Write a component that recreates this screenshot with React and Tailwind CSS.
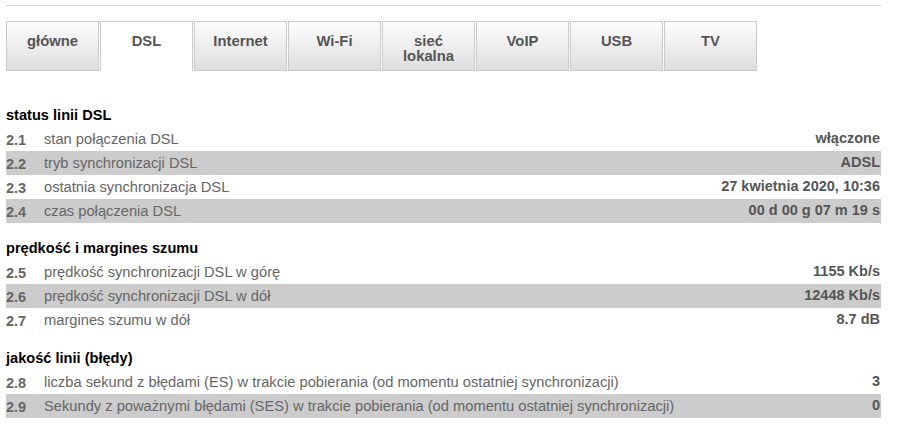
import React from 'react';

const tabs = [
  { id: 'glowne', label: 'główne' },
  { id: 'dsl', label: 'DSL' },
  { id: 'internet', label: 'Internet' },
  { id: 'wifi', label: 'Wi-Fi' },
  { id: 'lan', label: ['sieć', 'lokalna'] },
  { id: 'voip', label: 'VoIP' },
  { id: 'usb', label: 'USB' },
  { id: 'tv', label: 'TV' },
];

const sections = [
  {
    title: 'status linii DSL',
    spacing: 'mt-[32px]',
    rows: [
      ['2.1', 'stan połączenia DSL', 'włączone'],
      ['2.2', 'tryb synchronizacji DSL', 'ADSL'],
      ['2.3', 'ostatnia synchronizacja DSL', '27 kwietnia 2020, 10:36'],
      ['2.4', 'czas połączenia DSL', '00 d 00 g 07 m 19 s'],
    ],
  },
  {
    title: 'prędkość i margines szumu',
    spacing: 'mt-[13px]',
    rows: [
      ['2.5', 'prędkość synchronizacji DSL w górę', '1155 Kb/s'],
      ['2.6', 'prędkość synchronizacji DSL w dół', '12448 Kb/s'],
      ['2.7', 'margines szumu w dół', '8.7 dB'],
    ],
  },
  {
    title: 'jakość linii (błędy)',
    spacing: 'mt-[14px]',
    rows: [
      ['2.8', 'liczba sekund z błędami (ES) w trakcie pobierania (od momentu ostatniej synchronizacji)', '3'],
      ['2.9', 'Sekundy z poważnymi błędami (SES) w trakcie pobierania (od momentu ostatniej synchronizacji)', '0'],
    ],
  },
];

const Tab = ({ label, active }) => (
  <div
    className={`w-[93px] h-[50px] shrink-0 border border-[#cacaca] text-center text-[14.8px] leading-[15px] font-bold text-[#555] pt-[12px] ${
      active ? 'bg-white border-b-0' : 'bg-gradient-to-b from-[#fdfdfd] to-[#dedede]'
    }`}
  >
    {Array.isArray(label) ? (
      <>
        {label[0]}
        <br />
        {label[1]}
      </>
    ) : (
      label
    )}
  </div>
);

const App = () => {
  return (
    <div className="w-[898px] h-[438px] bg-white overflow-hidden font-['Liberation_Sans',Arial,sans-serif]">
      <div className="ml-[6px] w-[875px] pt-[5px]">
        <div className="h-px bg-[#d6d6d6]" />

        {/* tab bar */}
        <div className="mt-[15px] flex gap-px">
          {tabs.map((t) => (
            <Tab key={t.id} label={t.label} active={t.id === 'dsl'} />
          ))}
        </div>

        {sections.map((s) => (
          <div key={s.title} className={s.spacing}>
            <h3 className="h-[24px] leading-[24px] text-[14.6px] font-bold text-black">{s.title}</h3>
            {s.rows.map(([num, label, value], i) => (
              <div
                key={num}
                className={`flex items-center h-[24px] ${i % 2 === 1 ? 'bg-[#cccccc]' : 'bg-white'}`}
              >
                <span className="w-[38px] shrink-0 mt-[4px] text-[14.5px] font-bold text-[#666]">{num}</span>
                <span className="text-[14.7px] text-[#666] whitespace-nowrap">{label}</span>
                <span className="ml-auto pr-px text-[14.5px] font-bold text-[#555] whitespace-nowrap">{value}</span>
              </div>
            ))}
          </div>
        ))}
      </div>
    </div>
  );
};

export default App;
